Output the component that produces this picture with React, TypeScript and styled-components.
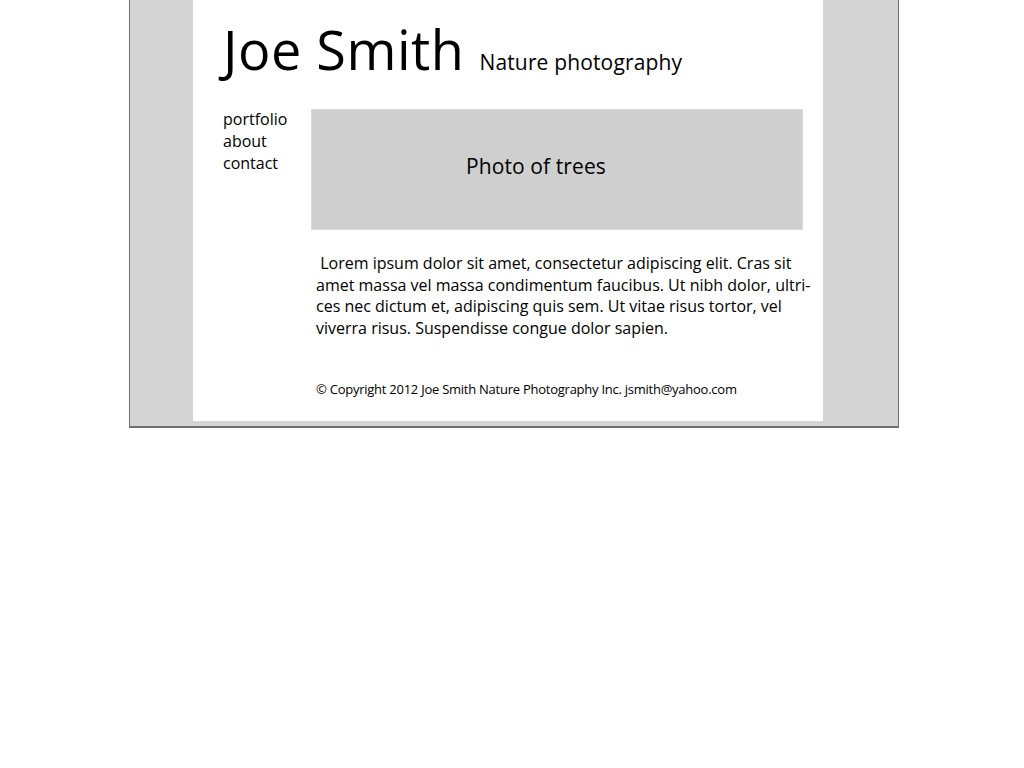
import React from "react";
import styled, { createGlobalStyle } from "styled-components";

const GlobalStyle = createGlobalStyle`
  body {
    margin: 0;
    background: #ffffff;
    font-family: "Open Sans", "Noto Sans", sans-serif;
    color: #000000;
  }
`;

const Frame = styled.div`
  box-sizing: border-box;
  margin-left: 129px;
  width: 770px;
  height: 428px;
  border: 1px solid #6f6f6f;
  border-top: none;
  border-bottom-width: 2px;
  background: #d4d4d4;
  padding-left: 63px;
`;

const Panel = styled.div`
  box-sizing: border-box;
  width: 630px;
  height: 421px;
  background: #ffffff;
  padding: 18px 20px 0 30px;
`;

const Header = styled.header`
  display: flex;
  align-items: baseline;
  gap: 15px;
  height: 91px;
`;

const Title = styled.h1`
  margin: 0;
  font-size: 54px;
  font-weight: 400;
  letter-spacing: 0.5px;
  line-height: 62px;
`;

const Tagline = styled.span`
  font-size: 21px;
  letter-spacing: 0.15px;
`;

const Body = styled.div`
  display: grid;
  grid-template-columns: 88px 492px;
`;

const Nav = styled.nav`
  display: flex;
  flex-direction: column;
  margin-top: -1px;
`;

const NavLink = styled.a`
  font-size: 16px;
  line-height: 22px;
  color: #000000;
  text-decoration: none;
`;

const Content = styled.main`
  display: flex;
  flex-direction: column;
`;

const Photo = styled.div`
  box-sizing: border-box;
  height: 121px;
  background: #cfcfcf;
  border: 1px solid #dadada;
  display: flex;
  align-items: center;
  padding: 0 0 8px 154px;
  font-size: 21px;
  letter-spacing: 0.1px;
`;

const Text = styled.p`
  margin: 23px 0 0 5px;
  font-size: 16px;
  line-height: 21.5px;
  white-space: pre;
`;

const Copyright = styled.p`
  margin: 41px 0 0 5px;
  font-size: 13px;
  letter-spacing: -0.25px;
`;

const lorem = ` Lorem ipsum dolor sit amet, consectetur adipiscing elit. Cras sit
amet massa vel massa condimentum faucibus. Ut nibh dolor, ultri-
ces nec dictum et, adipiscing quis sem. Ut vitae risus tortor, vel
viverra risus. Suspendisse congue dolor sapien.`;

export default function App() {
  return (
    <>
      <GlobalStyle />
      <Frame>
        <Panel>
          <Header>
            <Title>Joe Smith</Title>
            <Tagline>Nature photography</Tagline>
          </Header>
          <Body>
            <Nav>
              <NavLink href="#">portfolio</NavLink>
              <NavLink href="#">about</NavLink>
              <NavLink href="#">contact</NavLink>
            </Nav>
            <Content>
              <Photo>Photo of trees</Photo>
              <Text>{lorem}</Text>
              <Copyright>© Copyright 2012 Joe Smith Nature Photography Inc. jsmith@yahoo.com</Copyright>
            </Content>
          </Body>
        </Panel>
      </Frame>
    </>
  );
}
